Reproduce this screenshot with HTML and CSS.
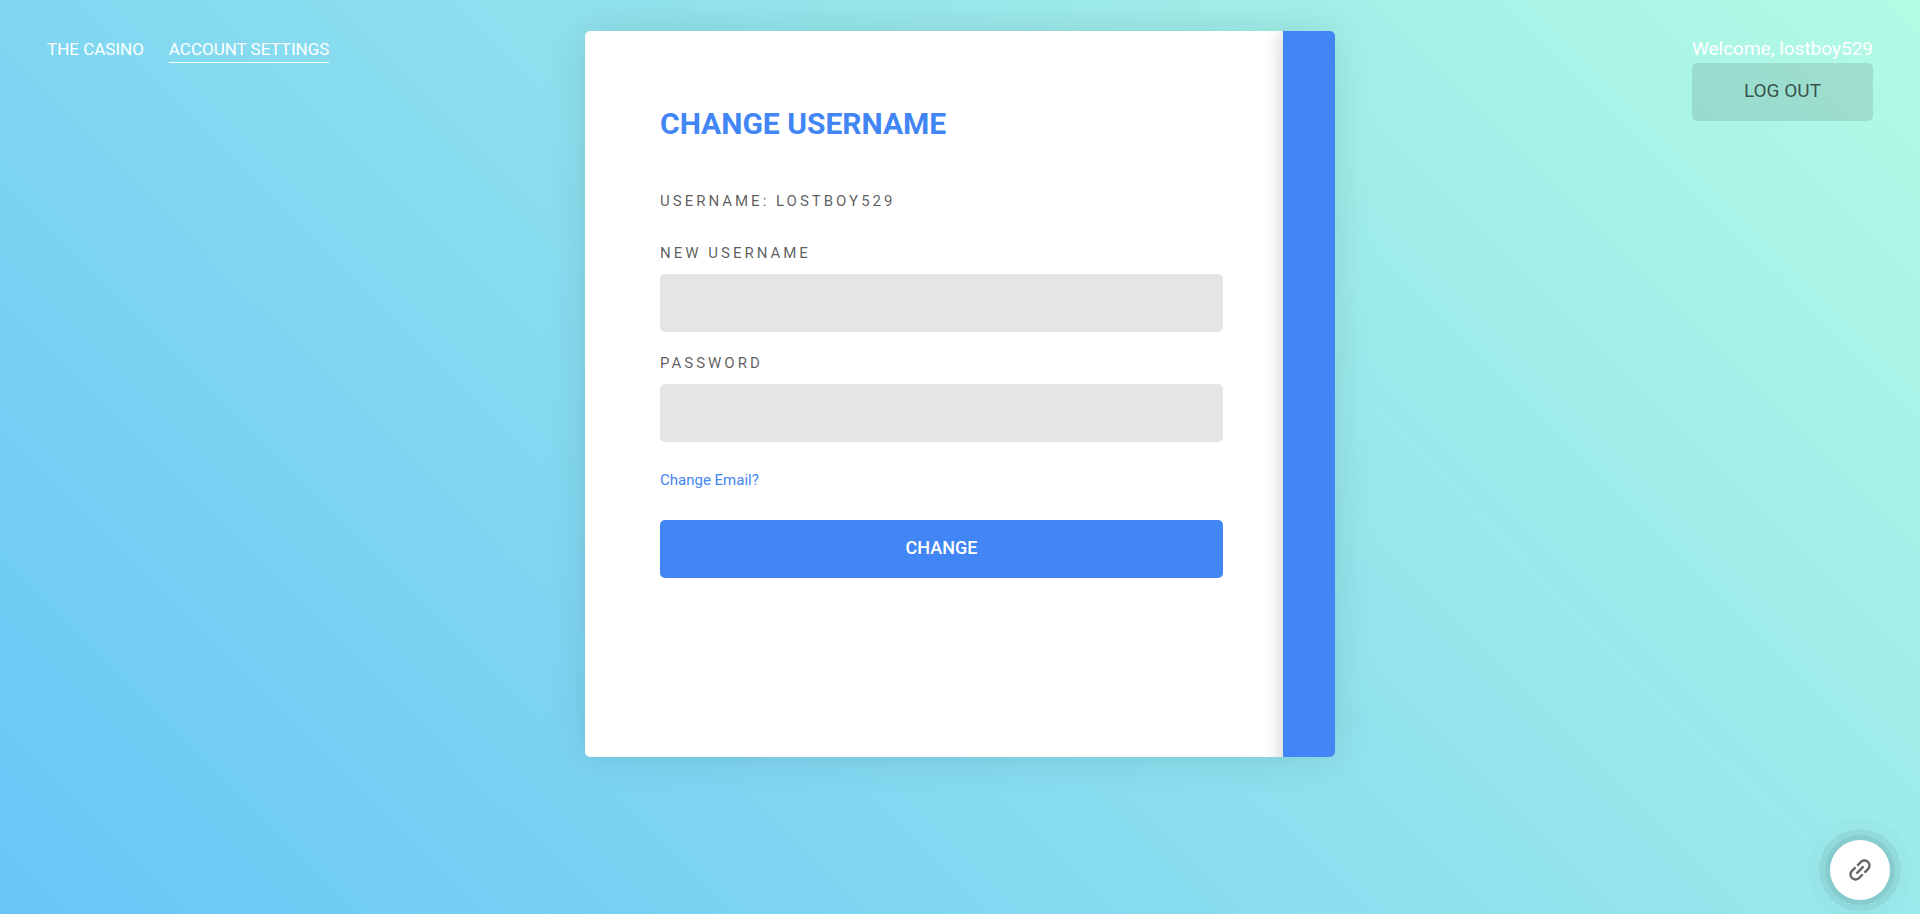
FILE: index.html
```html
<!DOCTYPE html>
<html lang="en">
<head>
<meta charset="utf-8">
<meta name="viewport" content="width=device-width, initial-scale=1">
<title>Change Username</title>
<link rel="stylesheet" href="styles.css">
</head>
<body>
<div class="page">
  <nav class="nav">
    <a class="nav-link" href="#">The Casino</a>
    <a class="nav-link nav-link-active" href="#">Account Settings</a>
  </nav>
  <main class="card">
    <form class="form">
      <h1 class="title">Change Username</h1>
      <p class="current">Username: lostboy529</p>
      <div class="field">
        <label class="label" for="username">New Username</label>
        <input class="input" id="username" type="text">
      </div>
      <div class="field">
        <label class="label" for="password">Password</label>
        <input class="input" id="password" type="password">
      </div>
      <a class="email-link" href="#">Change Email?</a>
      <button class="submit" type="submit">Change</button>
    </form>
    <div class="side-panel"></div>
  </main>
  <div class="account">
    <span class="welcome">Welcome, lostboy529</span>
    <button class="logout" type="button">Log Out</button>
  </div>
</div>
<a class="fab" href="#" aria-label="Link">
  <svg class="fab-icon" viewBox="0 0 24 24" aria-hidden="true"><path transform="rotate(-45 12 12)" d="M3.9 12c0-1.71 1.39-3.1 3.1-3.1h4V7H7c-2.76 0-5 2.24-5 5s2.24 5 5 5h4v-1.900H7c-1.710 0-3.100-1.390-3.100-3.100zM8 13h8v-2H8v2zm9-6h-4v1.900h4c1.710 0 3.100 1.390 3.100 3.100s-1.390 3.100-3.100 3.100h-4V17h4c2.760 0 5-2.240 5-5s-2.240-5-5-5z"/></svg>
</a>
</body>
</html>
```
FILE: styles.css
```css
* {
  box-sizing: border-box;
}

body {
  margin: 0;
  min-height: 100vh;
  font-family: Roboto, "Liberation Sans", sans-serif;
  font-size: 18px;
  line-height: 26px;
  background: linear-gradient(45deg, rgba(66, 183, 245, 0.8) 0%, rgba(66, 245, 189, 0.4) 100%) #fff;
}

.page {
  display: grid;
  grid-template-columns: 1fr minmax(0, 750px) 1fr;
  align-items: start;
  padding: 31px 47px;
}

.nav {
  display: flex;
  gap: 25px;
  padding-top: 5px;
}

.nav-link {
  color: #fff;
  font-size: 17px;
  line-height: 26px;
  text-transform: uppercase;
  text-decoration: none;
  border-bottom: 1px solid transparent;
}

.nav-link-active {
  border-color: #fff;
}

.card {
  display: flex;
  min-height: 726px;
  overflow: hidden;
  background: #fff;
  border-radius: 5px;
  box-shadow: 0 0 40px rgba(0, 0, 0, 0.11);
}

.form {
  display: flex;
  flex: 1;
  flex-direction: column;
  align-items: stretch;
  padding: 74px 60px 75px 75px;
}

.side-panel {
  width: 52px;
  margin-bottom: -20px;
  background: #4285f4;
  box-shadow: 0 0 20px rgba(0, 0, 0, 0.22);
}

.title {
  margin: 0 0 48px;
  color: #4285f4;
  font-size: 30px;
  font-weight: 700;
  line-height: 38px;
  text-transform: uppercase;
}

.current,
.label {
  margin: 0;
  color: rgba(0, 0, 0, 0.65);
  font-size: 15px;
  line-height: 20px;
  letter-spacing: 3px;
  text-transform: uppercase;
}

.current {
  margin-bottom: 32px;
}

.field {
  display: flex;
  flex-direction: column;
  gap: 11px;
  margin-bottom: 21px;
}

.input {
  width: 100%;
  height: 58px;
  padding: 12px 24px;
  border: 0;
  border-radius: 5px;
  background: rgba(0, 0, 0, 0.1);
  font: inherit;
}

.email-link {
  align-self: flex-start;
  margin: 7px 0 30px;
  color: #4285f4;
  font-size: 15px;
  line-height: 20px;
  text-decoration: none;
}

.submit,
.logout {
  height: 58px;
  padding: 0 0 2px;
  border: 0;
  border-radius: 5px;
  font: inherit;
  text-transform: uppercase;
}

.submit {
  color: #fff;
  font-weight: 500;
  background: #4285f4;
}

.account {
  display: flex;
  flex-direction: column;
  gap: 1px;
  justify-self: end;
  padding-top: 5px;
}

.welcome,
.logout {
  font-size: 19px;
}

.welcome {
  color: #fff;
}

.logout {
  color: rgba(0, 0, 0, 0.65);
  background: rgba(0, 0, 0, 0.1);
}

.fab {
  position: fixed;
  right: 30px;
  bottom: 14px;
  display: flex;
  align-items: center;
  justify-content: center;
  width: 60px;
  height: 60px;
  border-radius: 50%;
  background: #fff;
  box-shadow:
    0 0 0 5px rgba(0, 0, 0, 0.06),
    0 0 0 11px rgba(0, 0, 0, 0.06),
    0 0 0 22px rgba(0, 0, 0, 0.01),
    0 0 12px rgba(0, 0, 0, 0.04);
}

.fab-icon {
  width: 30px;
  height: 30px;
  fill: #666;
}
```
